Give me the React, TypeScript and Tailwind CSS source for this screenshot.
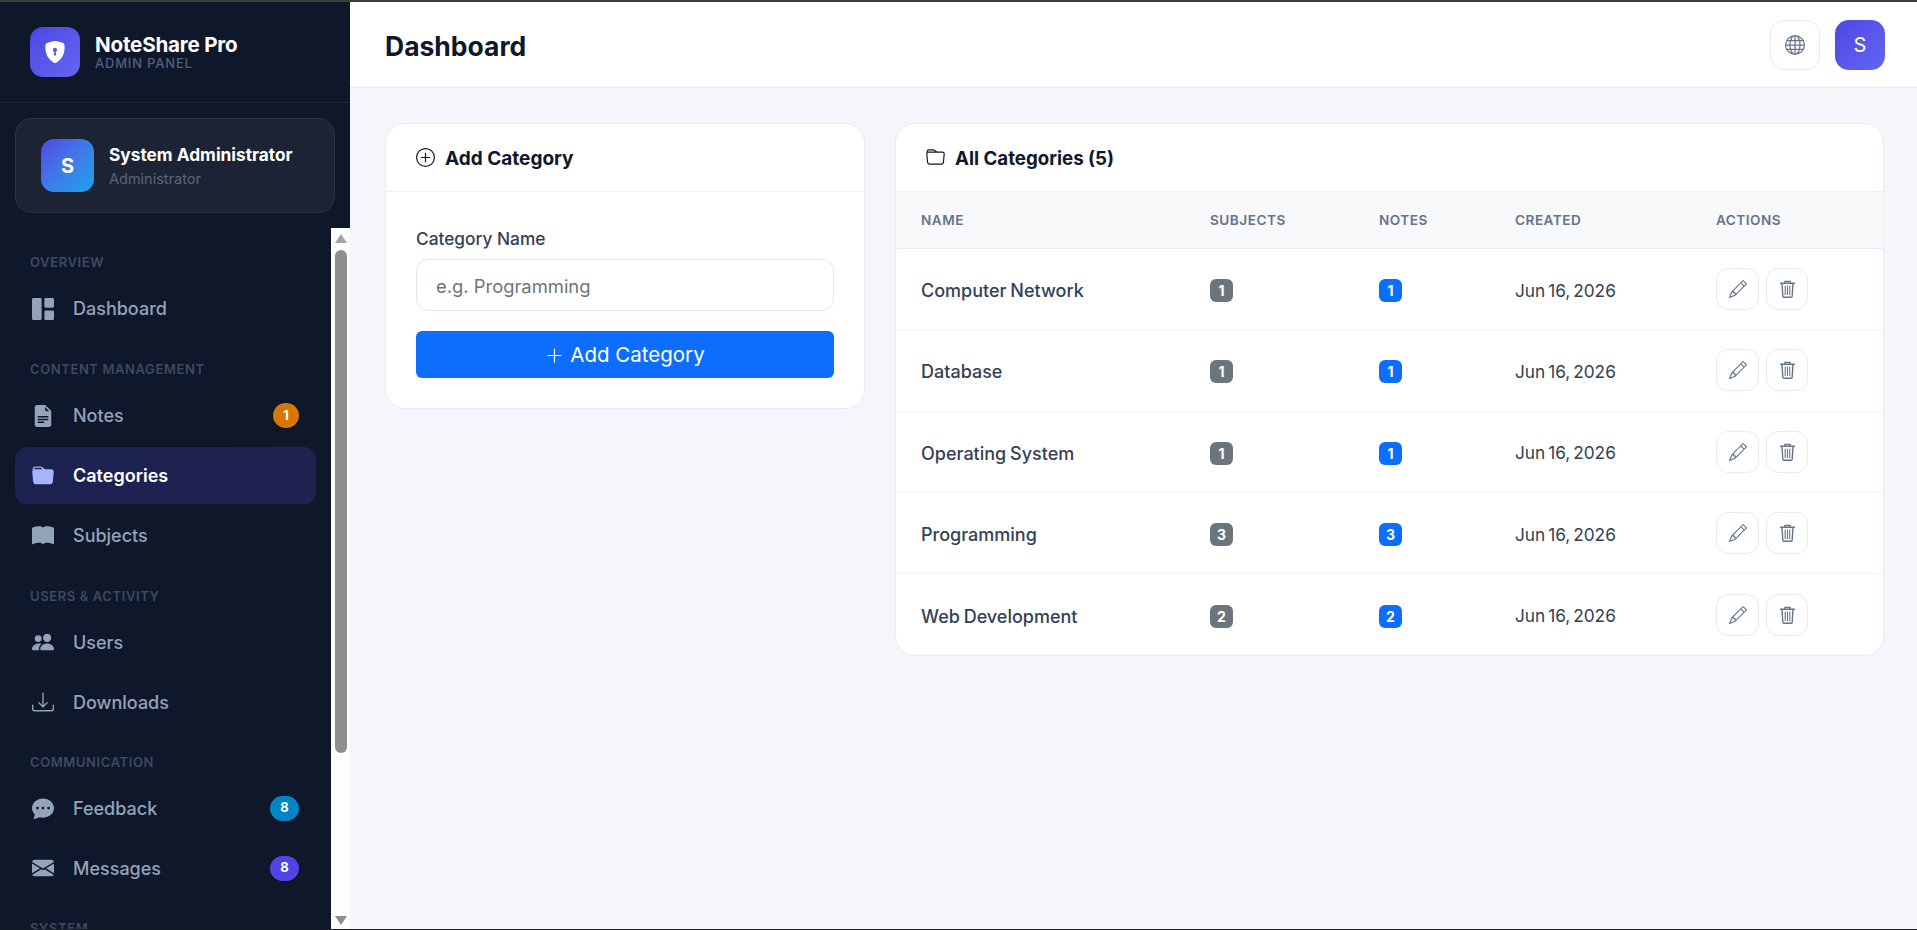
import {
  BsShieldLockFill,
  BsGrid1X2Fill,
  BsFileEarmarkTextFill,
  BsFolderFill,
  BsBookFill,
  BsPeopleFill,
  BsDownload,
  BsChatDotsFill,
  BsEnvelopeFill,
  BsPlusCircle,
  BsFolder,
  BsGlobe,
  BsPencil,
  BsPlusLg,
} from 'react-icons/bs';
import type { IconType } from 'react-icons';

type NavItem = { icon: IconType; label: string; badge?: string; badgeClass?: string; active?: boolean };

const groups: { title: string; top: string; items: NavItem[] }[] = [
  { title: 'OVERVIEW', top: 'mt-[26px]', items: [{ icon: BsGrid1X2Fill, label: 'Dashboard' }] },
  {
    title: 'CONTENT MANAGEMENT',
    top: 'mt-[24px]',
    items: [
      { icon: BsFileEarmarkTextFill, label: 'Notes', badge: '1', badgeClass: 'bg-[#d97706] w-[26px]' },
      { icon: BsFolderFill, label: 'Categories', active: true },
      { icon: BsBookFill, label: 'Subjects' },
    ],
  },
  {
    title: 'USERS & ACTIVITY',
    top: 'mt-[23.5px]',
    items: [
      { icon: BsPeopleFill, label: 'Users' },
      { icon: BsDownload, label: 'Downloads' },
    ],
  },
  {
    title: 'COMMUNICATION',
    top: 'mt-[23px]',
    items: [
      { icon: BsChatDotsFill, label: 'Feedback', badge: '8', badgeClass: 'bg-[#0284c7] w-[29px]' },
      { icon: BsEnvelopeFill, label: 'Messages', badge: '8', badgeClass: 'bg-[#4f46e5] w-[29px]' },
    ],
  },
  { title: 'SYSTEM', top: 'mt-[23px]', items: [] },
];

const categories = [
  { name: 'Computer Network', subjects: 1, notes: 1 },
  { name: 'Database', subjects: 1, notes: 1 },
  { name: 'Operating System', subjects: 1, notes: 1 },
  { name: 'Programming', subjects: 3, notes: 3 },
  { name: 'Web Development', subjects: 2, notes: 2 },
];

function TrashIcon() {
  return (
    <svg width="15" height="18" viewBox="0 0 15 18" fill="none" stroke="#64748b" strokeWidth="1.4" strokeLinecap="round">
      <path d="M0.7 3.2h13.6" strokeWidth="1.6" />
      <path d="M5 3V1.4h5V3" />
      <path d="M2 3.4l0.8 12.6c0 0.8 0.6 1.3 1.3 1.3h6.8c0.7 0 1.3-0.5 1.3-1.3L13 3.4" />
      <path d="M5.2 6v8.4M7.5 6v8.4M9.8 6v8.4" strokeWidth="1.1" />
    </svg>
  );
}

function Sidebar() {
  return (
    <aside className="w-[350px] shrink-0 h-full bg-[#0f172a] flex flex-col">
      {/* Brand */}
      <div className="h-[101px] shrink-0 border-b border-[#1e293b] flex items-center pl-[30px] gap-[15px]">
        <div className="w-[50px] h-[50px] rounded-[13px] bg-gradient-to-br from-[#4f46e5] to-[#6366f1] flex items-center justify-center">
          <BsShieldLockFill className="w-[22px] h-[22px] text-white" />
        </div>
        <div className="flex flex-col">
          <span className="text-[20.6px] leading-[22px] font-bold text-white tracking-[-0.2px]">NoteShare Pro</span>
          <span className="text-[13px] leading-[15px] font-medium text-[#526079] tracking-[0.8px]">ADMIN PANEL</span>
        </div>
      </div>

      {/* User card */}
      <div className="shrink-0 mx-[15px] mt-[15px] h-[95px] rounded-[16px] bg-[#1b2335] border border-[#283347] flex items-center pl-[25px] gap-[15px]">
        <div className="w-[53px] h-[53px] rounded-[13px] bg-gradient-to-br from-[#4f46e5] to-[#0ea5e9] flex items-center justify-center text-white text-[20px] font-bold">
          S
        </div>
        <div className="flex flex-col gap-[3px] pt-[2px]">
          <span className="text-[17.3px] leading-[22px] font-bold text-white">System Administrator</span>
          <span className="text-[14.5px] leading-[20px] text-[#5b6579]">Administrator</span>
        </div>
      </div>

      {/* Nav */}
      <div className="flex-1 min-h-0 flex mt-[15px]">
        <nav className="flex-1 min-w-0 overflow-hidden pl-[15px] pr-[15px]">
          {groups.map((g) => (
            <div key={g.title} className={g.top}>
              <div className="pl-[15px] text-[13px] leading-[16px] font-semibold tracking-[0.6px] text-[#3b4a60] mb-[10px]">
                {g.title}
              </div>
              <div className="flex flex-col gap-[3px]">
                {g.items.map((item) => {
                  const Icon = item.icon;
                  return (
                    <div
                      key={item.label}
                      className={
                        item.active
                          ? 'h-[57px] rounded-[12px] bg-gradient-to-r from-[#1c2250] to-[#1e2350] flex items-center pl-[17px] pr-[17px] gap-[19px]'
                          : 'h-[57px] rounded-[12px] flex items-center pl-[17px] pr-[17px] gap-[19px]'
                      }
                    >
                      <Icon className={item.active ? 'w-[22px] h-[22px] text-[#a5b4fc]' : 'w-[22px] h-[22px] text-[#94a3b8]'} />
                      <span className={item.active ? 'flex-1 text-[18px] font-semibold text-white' : 'flex-1 text-[18px] font-medium text-[#94a3b8]'}>
                        {item.label}
                      </span>
                      {item.badge && (
                        <span
                          className={`${item.badgeClass} h-[25px] rounded-full text-white text-[13px] font-bold flex items-center justify-center`}
                        >
                          {item.badge}
                        </span>
                      )}
                    </div>
                  );
                })}
              </div>
            </div>
          ))}
        </nav>
        {/* Scrollbar */}
        <div className="w-[19px] shrink-0 bg-[#fdfdfd] flex flex-col items-center">
          <div className="mt-[6px] w-0 h-0 border-x-[6px] border-x-transparent border-b-[9px] border-b-[#a3a3a3]" />
          <div className="mt-[7px] w-[12px] h-[503px] rounded-full bg-[#8f8f8f]" />
          <div className="flex-1" />
          <div className="mb-[4px] w-0 h-0 border-x-[6px] border-x-transparent border-t-[9px] border-t-[#8f8f8f]" />
        </div>
      </div>
    </aside>
  );
}

function AddCategoryCard() {
  return (
    <div className="w-[480px] shrink-0 h-[286px] rounded-[20px] bg-white border border-[#e8ebf3] overflow-hidden">
      <div className="h-[67.5px] border-b border-[#eef0f6] flex items-center pl-[30px] gap-[10px]">
        <BsPlusCircle className="w-[19px] h-[19px] text-[#0f172a]" />
        <span className="text-[19px] pt-[3px] font-bold text-[#0f172a]">Add Category</span>
      </div>
      <div className="px-[30px] pt-[35px]">
        <div className="text-[17.3px] leading-[24px] font-medium text-[#334155] mb-[8px]">Category Name</div>
        <input
          placeholder="e.g. Programming"
          className="w-full h-[52.5px] rounded-[12px] border border-[#e2e6f0] pl-[19px] pr-[20px] pt-[2px] text-[18.4px] placeholder:text-[#6c757d] outline-none"
        />
        <button className="mt-[20px] w-full h-[47px] pt-[2px] rounded-[6px] bg-[#0d6efd] text-white text-[20.5px] flex items-center justify-center gap-[6px]">
          <BsPlusLg className="w-[19px] h-[19px]" />
          Add Category
        </button>
      </div>
    </div>
  );
}

function CategoriesTable() {
  return (
    <div className="flex-1 h-[533px] rounded-[20px] bg-white border border-[#e8ebf3] overflow-hidden">
      <div className="h-[67.5px] border-b border-[#eef0f6] flex items-center pl-[30px] gap-[10px]">
        <BsFolder className="w-[19px] h-[19px] text-[#0f172a]" />
        <span className="text-[18.7px] pt-[3px] font-bold text-[#0f172a]">All Categories (5)</span>
      </div>
      <table className="w-full table-fixed border-collapse">
        <colgroup>
          <col className="w-[289px]" />
          <col className="w-[169px]" />
          <col className="w-[136px]" />
          <col className="w-[201px]" />
          <col />
        </colgroup>
        <thead>
          <tr className="h-[57px] bg-[#f8f9fb] border-b border-[#e8ebf3]">
            {['NAME', 'SUBJECTS', 'NOTES', 'CREATED', 'ACTIONS'].map((h) => (
              <th key={h} className="pl-[25px] text-left text-[13.6px] font-semibold tracking-[0.5px] text-[#64748b]">
                {h}
              </th>
            ))}
          </tr>
        </thead>
        <tbody>
          {categories.map((c, i) => (
            <tr key={c.name} className={i < 4 ? 'h-[81.3px] border-b border-[#f1f3f8]' : 'h-[81.3px]'}>
              <td className="pl-[25px] pt-[3px] text-[18px] font-medium text-[#334155] [word-spacing:-1px]">{c.name}</td>
              <td className="pl-[25px] pt-[2px]">
                <span className="inline-flex items-center justify-center w-[23px] h-[23px] rounded-[6px] bg-[#6c757d] text-white text-[14px] font-bold">
                  {c.subjects}
                </span>
              </td>
              <td className="pl-[25px] pt-[2px]">
                <span className="inline-flex items-center justify-center w-[23px] h-[23px] rounded-[6px] bg-[#0d6efd] text-white text-[14px] font-bold">
                  {c.notes}
                </span>
              </td>
              <td className="pl-[25px] pt-[3px] text-[17.3px] text-[#334155] [word-spacing:-2px]">Jun 16, 2026</td>
              <td className="pl-[25px]">
                <div className="flex gap-[7px]">
                  <button className="w-[43px] h-[42px] rounded-[12px] border border-[#e8ebf3] flex items-center justify-center">
                    <BsPencil className="w-[18px] h-[18px] text-[#64748b]" />
                  </button>
                  <button className="w-[42px] h-[42px] rounded-[12px] border border-[#e8ebf3] flex items-center justify-center">
                    <TrashIcon />
                  </button>
                </div>
              </td>
            </tr>
          ))}
        </tbody>
      </table>
    </div>
  );
}

export default function App() {
  return (
    <div className="h-screen overflow-hidden flex flex-col font-['Inter',sans-serif]">
      <div className="h-[2px] shrink-0 bg-[#3c3c3c]" />
      <div className="flex-1 min-h-0 flex">
        <Sidebar />
        <main className="flex-1 min-w-0 flex flex-col bg-[#f4f6fb]">
          <header className="h-[86px] shrink-0 bg-white border-b border-[#e8ebf3] flex items-center justify-between pl-[35px] pr-[32px]">
            <h1 className="text-[26.5px] pt-[4px] font-bold text-[#0f172a]">Dashboard</h1>
            <div className="flex items-center gap-[15px]">
              <button className="w-[50px] h-[50px] rounded-[14px] border border-[#e8ebf3] bg-white flex items-center justify-center">
                <BsGlobe className="w-[20px] h-[20px] text-[#64748b]" />
              </button>
              <div className="w-[50px] h-[50px] rounded-[14px] bg-gradient-to-br from-[#4f46e5] to-[#6366f1] flex items-center justify-center text-white text-[20px]">
                S
              </div>
            </div>
          </header>
          <div className="flex-1 flex items-start gap-[30px] pl-[35px] pr-[33px] pt-[35px]">
            <AddCategoryCard />
            <CategoriesTable />
          </div>
        </main>
      </div>
      <div className="h-[1px] shrink-0 bg-[#1f1f1f]" />
    </div>
  );
}
